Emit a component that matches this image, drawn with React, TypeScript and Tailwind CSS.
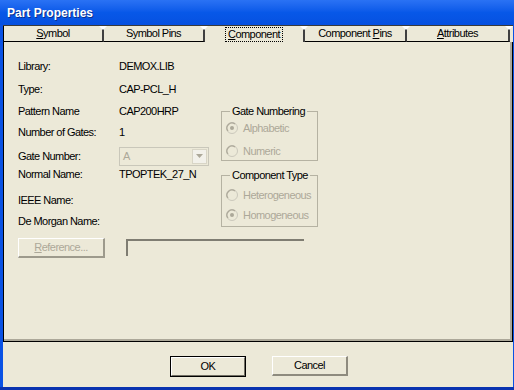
import React from "react";

const tabs = [
  { label: "Symbol", key: "S", w: "w-[101px]" },
  { label: "Symbol Pins", key: "", w: "w-[101px]" },
  { label: "Component", key: "C", w: "w-[100px]", active: true },
  { label: "Component Pins", key: "P", w: "w-[102px]" },
  { label: "Attributes", key: "A", w: "w-[103px]" },
];

function Mnemonic({ text, k }: { text: string; k: string }) {
  const i = k ? text.indexOf(k) : -1;
  if (i < 0) return <>{text}</>;
  return (
    <>
      {text.slice(0, i)}
      <span className="underline">{text[i]}</span>
      {text.slice(i + 1)}
    </>
  );
}

function Radio({ label, checked }: { label: string; checked?: boolean }) {
  return (
    <div className="flex items-center h-[18px] gap-[5px] text-[#ACA899] whitespace-nowrap">
      <svg width="12" height="12" viewBox="0 0 12 12" className="shrink-0">
        <circle cx="6" cy="6" r="5.5" fill="#ECE9D8" stroke="#CAC8BB" />
        <path d="M2 9 A5 5 0 0 1 9 2" fill="none" stroke="#ACA899" strokeWidth="1.2" />
        {checked && <circle cx="6" cy="6" r="2" fill="#ACA899" />}
      </svg>
      <span>{label}</span>
    </div>
  );
}

function Row({ label, value, mt }: { label: string; value?: React.ReactNode; mt: string }) {
  return (
    <div className={`flex items-center h-[20px] ${mt}`}>
      <div className="w-[101px] whitespace-nowrap">{label}</div>
      <div className="whitespace-nowrap">{value}</div>
    </div>
  );
}

export default function App() {
  return (
    <div className="w-[514px] h-[390px] flex flex-col bg-[#0A52E4] border-b-[3px] border-[#0A33B0] font-['Liberation_Sans',sans-serif] text-[11px] tracking-[-0.55px] text-black overflow-hidden">
      {/* Title bar */}
      <div className="h-[25px] shrink-0 flex items-center pl-[7px] bg-gradient-to-b from-[#2A72F4] via-[#0758E8] to-[#0650E0]">
        <span className="font-bold text-[12px] tracking-normal text-white [text-shadow:1px_1px_0_#0B2F8C]">
          Part Properties
        </span>
      </div>

      <div className="flex-1 flex flex-col ml-[3px] mr-[1px] bg-[#ECE9D8]">
        {/* Tabs */}
        <div className="h-[17px] shrink-0 flex border-t border-[#3A3A3A]">
          {tabs.map((t) => (
            <div
              key={t.label}
              className={`relative ${t.w} h-full flex items-center justify-center border-r-2 border-r-[#404040] first:border-l first:border-l-black ${
                t.active ? "" : "border-b border-b-black"
              }`}
            >
              <svg className="absolute right-[-5px] top-0" width="8" height="5" viewBox="0 0 8 5">
                <path d="M0 0 L4 4 L8 0 Z" fill="#FFFFFF" />
              </svg>
              <span
                className={`leading-[13px] px-[2px] ${
                  t.active ? "outline outline-1 outline-dotted outline-black" : ""
                }`}
              >
                <Mnemonic text={t.label} k={t.key} />
              </span>
            </div>
          ))}
        </div>

        {/* Panel */}
        <div className="h-[300px] shrink-0 border-l border-b border-r border-black">
          <div className="h-full border-r-2 border-b-2 border-[#ACA899] pt-[14px] pl-[14px]">
            <div className="flex gap-[12px]">
              <div className="w-[191px] flex flex-col">
                <Row label="Library:" value="DEMOX.LIB" mt="mt-0" />
                <Row label="Type:" value="CAP-PCL_H" mt="mt-[3px]" />
                <Row label="Pattern Name" value="CAP200HRP" mt="mt-[2px]" />
                <Row label="Number of Gates:" value="1" mt="mt-[1px]" />
                <div className="flex items-center h-[20px] mt-[4px]">
                  <div className="w-[101px] whitespace-nowrap">Gate Number:</div>
                  <div className="w-[90px] h-[19px] flex border border-[#C9C7BA] bg-[#ECE9D8]">
                    <div className="flex-1 pl-[3px] flex items-center text-[#ACA899]">A</div>
                    <div className="w-[15px] m-[1px] flex items-center justify-center border border-[#D8D5C6] bg-[#F2F1EA]">
                      <svg width="7" height="4" viewBox="0 0 7 4">
                        <path d="M0 0 L7 0 L3.5 4 Z" fill="#ACA899" />
                      </svg>
                    </div>
                  </div>
                </div>
                <div className="flex items-center h-[16px]">
                  <div className="w-[101px] whitespace-nowrap">Normal Name:</div>
                  <div>TPOPTEK_27_N</div>
                </div>
                <Row label="IEEE Name:" mt="mt-[8px]" />
                <Row label="De Morgan Name:" mt="mt-[1px]" />
              </div>

              <div className="w-[97px] flex flex-col mt-[49px]">
                <fieldset className="h-[56px] border border-[#B5B2A2] pl-[4px]">
                  <legend className="ml-[4px] px-[2px] leading-[13px]">Gate Numbering</legend>
                  <div className="mt-[1px]">
                    <Radio label="Alphabetic" checked />
                  </div>
                  <div className="mt-[5px]">
                    <Radio label="Numeric" />
                  </div>
                </fieldset>
                <fieldset className="h-[58px] mt-[8px] border border-[#B5B2A2] pl-[4px]">
                  <legend className="ml-[4px] px-[2px] leading-[13px]">Component Type</legend>
                  <div className="mt-[4px]">
                    <Radio label="Heterogeneous" />
                  </div>
                  <div className="mt-[2px]">
                    <Radio label="Homogeneous" checked />
                  </div>
                </fieldset>
              </div>
            </div>

            <div className="flex items-start mt-[7px]">
              <div className="w-[87px] h-[20px] flex items-center justify-center border-t border-l border-white border-r-2 border-b-2 border-r-[#9D9A8C] border-b-[#9D9A8C] text-[#ACA899]">
                <Mnemonic text="Reference..." k="R" />
              </div>
              <div className="ml-[21px] mt-[1px] w-[178px] h-[17px] border-t-2 border-l-2 border-[#7F7D72]" />
            </div>
          </div>
        </div>

        {/* Buttons */}
        <div className="flex-1 flex justify-center gap-[26px] pt-[14px] pl-[2px]">
          <div className="w-[76px] h-[21px] border border-black">
            <div className="h-full flex items-center justify-center border-t border-l border-white border-r border-b border-r-[#716F64] border-b-[#716F64]">
              OK
            </div>
          </div>
          <div className="w-[76px] h-[20px] flex items-center justify-center border-t border-l border-white border-r-2 border-b-2 border-r-[#8E8B7E] border-b-[#8E8B7E]">
            Cancel
          </div>
        </div>
      </div>
    </div>
  );
}
